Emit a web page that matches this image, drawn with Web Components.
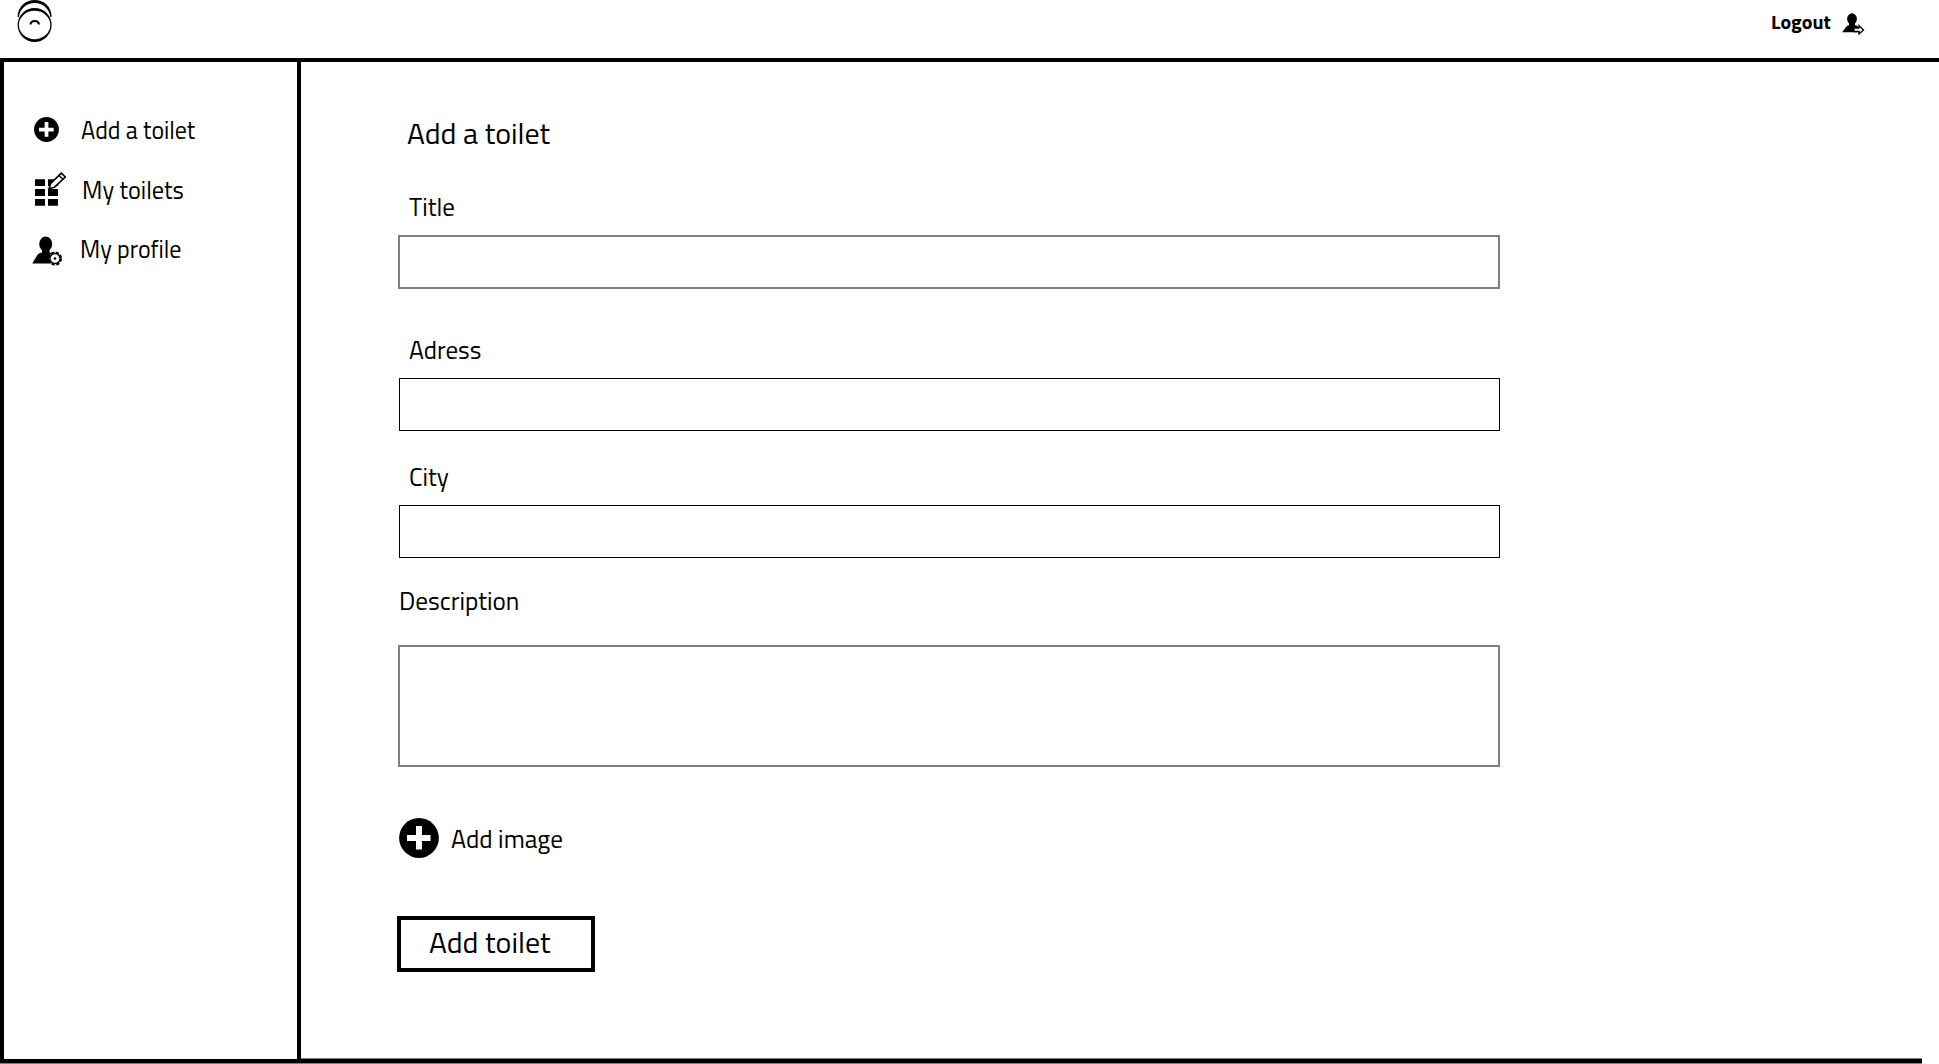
<!DOCTYPE html>
<html lang="en">
<head>
<meta charset="utf-8">
<title>Add a toilet</title>
<style>
html,body{margin:0;height:1064px;overflow:hidden;background:#fff}
body{font-family:"Titillium Web","Noto Sans","Open Sans",sans-serif;color:#000}
</style>
</head>
<body>
<toilet-app></toilet-app>
<script>
const define = (name, html, ready) => customElements.define(name, class extends HTMLElement {
  connectedCallback() {
    if (this.shadowRoot) return;
    const t = document.createElement('template');
    t.innerHTML = html;
    this.attachShadow({mode: 'open'}).appendChild(t.content.cloneNode(true));
    if (ready) ready.call(this, this.shadowRoot);
  }
});

/* One line of text set to a given width; attributes: text, size, width */
define('fit-text', `
<style>
:host{display:block;white-space:nowrap;line-height:30px;height:30px}
span{display:inline-block;transform-origin:0 50%}
</style><span></span>`, function (root) {
  const s = root.querySelector('span');
  const w = +this.getAttribute('width');
  s.textContent = this.getAttribute('text');
  s.style.fontSize = this.getAttribute('size') + 'px';
  this.style.width = w + 'px';
  s.style.transform = 'scaleX(' + w / s.offsetWidth + ')';
});

const ICONS = {
  logo: [40, 44, `<path fill-rule="evenodd" d="M3.600 25a17 17 0 1 1 34 0a17 17 0 1 1-34 0zM4.900 25a15.700 14.200 0 1 0 31.400 0a15.700 14.200 0 1 0-31.400 0z"/><path d="M3.600 17C3.800 6.500 11.500 0 20.700 0S37.500 6.500 37.700 17h-1.200C35 8 28.600 2.900 20.700 2.900S6.200 8 4.800 17z"/><path fill="none" stroke="#000" stroke-width="2" d="M16.500 24.500c.3-4.800 8.200-4.800 8.500 0"/>`],
  plus: [40, 40, `<circle cx="20" cy="20" r="19.900"/><path fill="#fff" d="M17 8h6v9h8.500v6H23v8.500h-6V23H8v-6h9z"/>`],
  grid: [34, 36, `<path d="M3 8.300h10V15H3zM16 8.300h10V15H16zM3 18h10v7H3zM16 18h10v7H16zM3 28h10v6.700H3zM16 28h10v6.700H16z"/><path d="M17 17.700l1.700-5.200L29.300 2.200l4 3.800L22.500 16.200z" fill="#fff" stroke="#000" stroke-width="1.600"/><path d="M27 4.500l4 3.800" stroke="#000" stroke-width="1.300"/>`],
  profile: [32, 32, `<ellipse cx="14.700" cy="8" rx="6.500" ry="7.600"/><path d="M11 13h7.500v5H11zM1.200 27.500l5.500-9q1-1.500 4.300-2h8q4 1 5 4v7z"/><circle cx="24" cy="22.500" r="6" fill="#fff" stroke="#000" stroke-width="2.200" stroke-dasharray="3.200 1.510"/><circle cx="24" cy="22.500" r="5" fill="#fff" stroke="#000" stroke-width="1.300"/><circle cx="24" cy="22.500" r="1.300"/>`],
  logout: [24, 22, `<ellipse cx="11" cy="6" rx="4.900" ry="5.800"/><path d="M8 10h6v4H8zM1.200 19.300l4-5.500q.8-1.400 3.500-1.800h5q4 .8 5 4v3.300z"/><path d="M13 15h5v-2.500l4.500 4.500-4.500 4v-2.500h-5z" fill="#fff" stroke="#000" stroke-width="1.300"/>`]
};
define('app-icon', `<style>:host{display:block;flex:none}svg{display:block;width:100%;height:100%}</style>`, function (root) {
  const [w, h, body] = ICONS[this.getAttribute('name')];
  const b = document.createElement('template');
  b.innerHTML = `<svg viewBox="0 0 ${w} ${h}">${body}</svg>`;
  root.appendChild(b.content);
  this.style.width = (this.getAttribute('size') || w) + 'px';
  this.style.height = (this.getAttribute('size') || h) + 'px';
});

define('app-header', `
<style>
:host{display:flex;box-sizing:border-box;height:62px;border-bottom:4px solid #000;padding-left:14px}
.logout{display:flex;margin-left:auto;padding-right:74px;font-weight:700}
fit-text{margin:7px 10px 0 0}
app-icon{margin-top:13px}
</style>
<app-icon name="logo" style="margin-top:0"></app-icon>
<div class="logout"><fit-text text="Logout" size="19" width="60"></fit-text><app-icon name="logout"></app-icon></div>`);

define('nav-item', `
<style>:host{display:flex;height:60px;align-items:flex-start}.icon{width:50px;flex:none}</style>
<div class="icon"><slot name="icon"></slot></div><slot></slot>`);

define('side-nav', `
<style>
:host{display:block;box-sizing:border-box;width:301px;border:solid #000;border-width:0 4px;padding:55px 0 0 28px}
</style>
<nav>
<nav-item><app-icon slot="icon" name="plus" size="25" style="margin:0 0 0 2px"></app-icon><fit-text text="Add a toilet" size="25" width="114" style="margin:-2px 0 0 -1px"></fit-text></nav-item>
<nav-item><app-icon slot="icon" name="grid" style="margin-top:-6px"></app-icon><fit-text text="My toilets" size="25" width="102" style="margin-top:-2px"></fit-text></nav-item>
<nav-item><app-icon slot="icon" name="profile" style="margin:-1px 0 0 -1px"></app-icon><fit-text text="My profile" size="25" width="102" style="margin:-3px 0 0 -2px"></fit-text></nav-item>
</nav>`);

/* Labelled input; attributes: label, width, indent, gap, box (height), soft (grey 2px outline) */
define('form-field', `
<style>
:host{display:block}
.box{box-sizing:border-box;width:1101px;margin-left:1px;border:1px solid #000}
:host([soft]) .box{width:1102px;margin-left:0;border:2px solid #808080}
</style>
<fit-text></fit-text><div class="box"></div>`, function (root) {
  const t = document.createElement('fit-text');
  t.setAttribute('text', this.getAttribute('label'));
  t.setAttribute('size', '25');
  t.setAttribute('width', this.getAttribute('width'));
  t.style.marginLeft = this.getAttribute('indent') + 'px';
  t.style.marginBottom = this.getAttribute('gap') + 'px';
  root.querySelector('fit-text').replaceWith(t);
  root.querySelector('.box').style.height = this.getAttribute('box') + 'px';
});

define('outline-button', `
<style>:host{display:block;box-sizing:border-box;width:198px;height:56px;border:4px solid #000;padding:7px 0 0 28px}</style><slot></slot>`);

define('add-form', `
<style>
:host{display:flex;flex-direction:column;padding:56px 0 0 97px;box-sizing:border-box;flex:1}
.image{display:flex;margin:51px 0 0 1px}
</style>
<fit-text text="Add a toilet" size="30" width="143" style="margin-left:9px"></fit-text>
<form-field soft label="Title" width="46" indent="11" gap="13" box="54" style="margin-top:44px"></form-field>
<form-field label="Adress" width="72" indent="11" gap="13" box="53" style="margin-top:46px"></form-field>
<form-field label="City" width="40" indent="11" gap="13" box="53" style="margin-top:31px"></form-field>
<form-field soft label="Description" width="120" indent="1" gap="29" box="122" style="margin-top:28px"></form-field>
<div class="image"><app-icon name="plus"></app-icon><fit-text text="Add image" size="25" width="112" style="margin:6px 0 0 12px"></fit-text></div>
<outline-button style="margin:58px 0 0 -1px"><fit-text text="Add toilet" size="30" width="122"></fit-text></outline-button>`);

define('toilet-app', `
<style>
:host{display:flex;flex-direction:column;width:1939px;height:1064px}
.body{display:flex;height:997px}
.rule{display:flex;height:6px;margin-top:-1px}
.left{width:301px;box-sizing:border-box;height:5px;margin-top:1px;background:#000;box-shadow:inset 0 -1px #808080}
.right{width:1621px;height:6px;box-sizing:border-box;background:#000;border-top:1px solid #808080;border-bottom:1px solid #808080}
</style>
<app-header></app-header>
<div class="body"><side-nav></side-nav><add-form></add-form></div>
<div class="rule"><div class="left"></div><div class="right"></div></div>`);
</script>
</body>
</html>
